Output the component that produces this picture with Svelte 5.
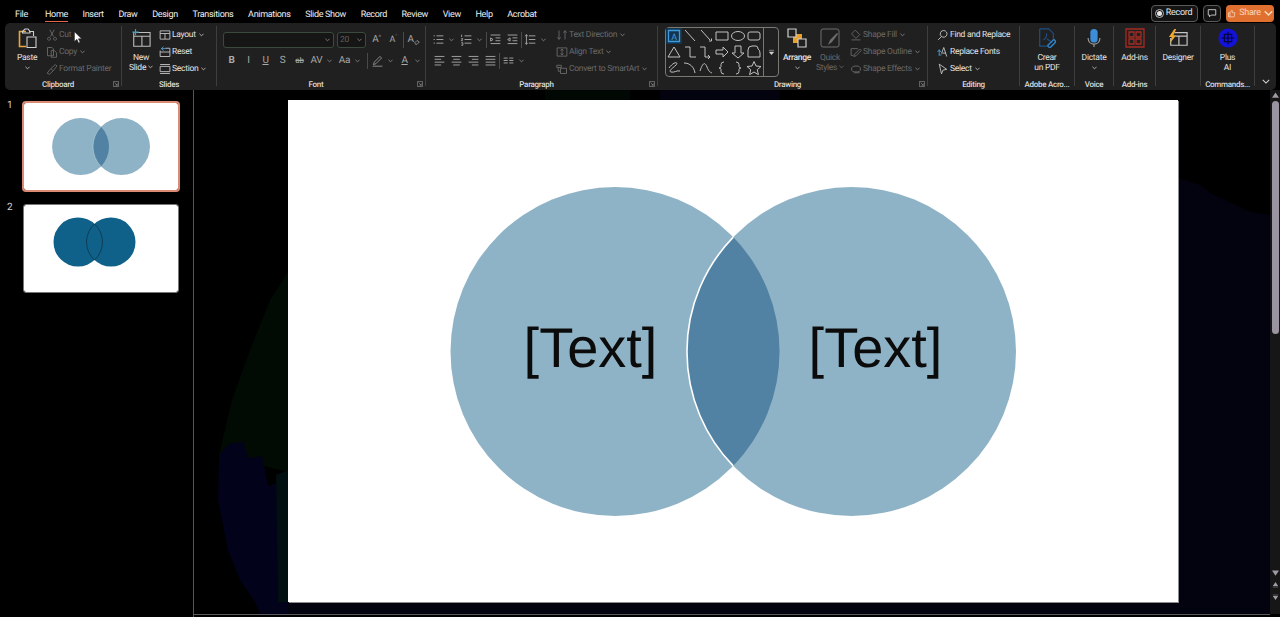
<script>
  const tabs = ['File', 'Home', 'Insert', 'Draw', 'Design', 'Transitions', 'Animations', 'Slide Show', 'Record', 'Review', 'View', 'Help', 'Acrobat'];

  // 16x16 stroke icons, shared by the small ribbon commands
  const icons = {
    cut: 'M5 1l5 9M11 1L6 10M4 11a2 2 0 1 0 .01 0zM12 11a2 2 0 1 0 .01 0z',
    copy: 'M2 2h6l2 2v9H2zM7 6h4l3 3v6H7z',
    painter: 'M1.5 13.5l5-6 3 3-5 4.5zM6.5 7.5l6-5.5 2 2-5 6.5',
    layout: 'M1.5 2.5h13v11h-13zM1.5 6h13M8 6v7.5',
    reset: 'M1.5 6v8h13v-11h-6M1.500 8h13',
    section: 'M1.5 2h13M1.5 14h13M1.5 4.5h13v7h-13z',
    direction: 'M4 2v11M2 11l2 3 2-3M12 14V3M10 5l2-3 2 3',
    align: 'M1.5 2.5h13v11h-13zM8 4v8M6 6l2-2 2 2M6 10l2 2 2-2',
    smartart: 'M1 3h6v3H1zM6 7h8v7H6zM3 6v5h3',
    fill: 'M7 1.5l6 6-5 5-6-6zM2 14.5h12',
    outline: 'M1.5 3.5h9M1.5 3.5v9h3M13 4l2 2-7 7-3 1 1-3z',
    effects: 'M2 8a6 4 0 1 0 12 0a6 4 0 1 0-12 0zM5 13h8',
    find: 'M6 10a4.5 4.5 0 1 0 3-8 4.5 4.5 0 0 0-3 8zM6 10l-4.5 4.5',
    fonts: 'M9 2l4 12M9 2l-3 8M7 9.500h5',
    select: 'M3 1.5l10 7-5 1-2 5z'
  };

  // blue second stroke on the two icons that have one
  const accents = {
    reset: 'M6 1L3 3.500 6 6M3 3.500h6',
    fonts: 'M1 8l2-3 2 3M3 5v7M2 12h4'
  };

  const clipboard = [
    { icon: 'cut', label: 'Cut' },
    { icon: 'copy', label: 'Copy', caret: true },
    { icon: 'painter', label: 'Format Painter' }
  ];
  const slides = [
    { icon: 'layout', label: 'Layout', caret: true, on: true },
    { icon: 'reset', label: 'Reset', on: true },
    { icon: 'section', label: 'Section', caret: true, on: true }
  ];
  const text = [
    { icon: 'direction', label: 'Text Direction', caret: true },
    { icon: 'align', label: 'Align Text', caret: true },
    { icon: 'smartart', label: 'Convert to SmartArt', caret: true }
  ];
  const shapeTools = [
    { icon: 'fill', label: 'Shape Fill', caret: true },
    { icon: 'outline', label: 'Shape Outline', caret: true },
    { icon: 'effects', label: 'Shape Effects', caret: true }
  ];
  const editing = [
    { icon: 'find', label: 'Find and Replace', on: true },
    { icon: 'fonts', label: 'Replace Fonts', on: true },
    { icon: 'select', label: 'Select', caret: true, on: true }
  ];

  // drawing gallery, six across and three down
  const shapes = [
    'M2.500 2.500h11v11h-11z', 'M3 2l10 11', 'M3 2l9 10M11 13h2.5v-2.5', 'M2 4h12v8H2z', 'M1.5 8a6.5 4.5 0 1 0 13 0a6.5 4.5 0 1 0-13 0z', 'M4 4h8q2 0 2 2v4q0 2-2 2H4q-2 0-2-2V6q0-2 2-2z',
    'M8 3l6 10H2z', 'M3 3h5v10h6', 'M2 3h5v10h5M10 11l2 2-2 2', 'M2 6h7V3l5 5-5 5v-3H2z', 'M5 2h6v7h3l-6 5-6-5h3z', 'M2 13V6q0-4 4-4h4q2 0 2 3 2 1 2 4v4z',
    'M3 8c5-7 10-6 7-3S2 11 5 12s6-2 9-1', 'M2 3c6 0 10 4 11 10', 'M2 11c3-9 5-9 7-4s3 5 5 6', 'M10 2q-3 0-3 2.500v2q0 1.500-2 1.500 2 0 2 1.500v2q0 2.500 3 2.500', 'M6 2q3 0 3 2.500v2q0 1.500 2 1.500-2 0-2 1.500v2q0 2.500-3 2.500', 'M8 1.500l2 4.500 5 .5-3.700 3.200 1.100 5L8 12l-4.400 2.700 1.100-5L1 6.500l5-.5z'
  ];
</script>

{#snippet caret()}
  <svg class="caret" viewBox="0 0 6 4"><path d="M.5 .5L3 3l2.500-2.500" /></svg>
{/snippet}

{#snippet glyph(d)}
  <svg class="glyph" viewBox="0 0 16 16"><path {d} /></svg>
{/snippet}

{#snippet tool(item)}
  <div class="tool" class:on={item.on}>
    <svg class="tool-icon" viewBox="0 0 16 16">
      <path d={icons[item.icon]} />
      {#if accents[item.icon]}<path class="accent" d={accents[item.icon]} />{/if}
    </svg>
    <span>{item.label}</span>
    {#if item.caret}{@render caret()}{/if}
  </div>
{/snippet}

{#snippet launcher()}
  <svg class="launcher" viewBox="0 0 7 7"><path d="M.5 .5h6v6h-6zM2 2l3 3M5 3v2H3" /></svg>
{/snippet}

{#snippet venn(labels)}
  <svg class="venn" viewBox="0 0 890 502">
    <circle cx="327" cy="251.500" r="164.500" fill="#8fb3c6" />
    <circle cx="563.500" cy="251.500" r="164.500" fill="#8fb3c6" />
    <path d="M445.250 137.100A164.500 164.500 0 0 1 445.250 365.900A164.500 164.500 0 0 1 445.250 137.100z" fill="#5282a3" />
    <path d="M445.250 365.900A164.500 164.500 0 0 1 445.250 137.100" fill="none" stroke="#fff" stroke-width="1.600" />
    {#if labels}
      <text x="302.500" y="267">[Text]</text>
      <text x="587.500" y="267">[Text]</text>
    {/if}
  </svg>
{/snippet}

<div class="app">
  <header class="topbar">
    <nav class="tabs">
      {#each tabs as tab}
        <span class="tab" class:active={tab === 'Home'}>{tab}</span>
      {/each}
    </nav>
    <div class="actions">
      <div class="record"><span class="dot"></span>Record</div>
      <div class="comment">
        <svg viewBox="0 0 12 12"><path d="M1.500 2h9v6.500H5L3 10.500V8.500H1.500z" /></svg>
      </div>
      <div class="share">
        <svg viewBox="0 0 12 12"><path d="M2 5h2l2-3h1v3h3.500L9.500 10.500H2zM4 5v5.500" /></svg>
        Share
        {@render caret()}
      </div>
    </div>
  </header>

  <section class="ribbon">
    <div class="group clipboard">
      <div class="body">
        <div class="big paste">
          <svg class="big-icon" viewBox="0 0 20 20">
            <path d="M9 3.500H2.500v15H9" fill="none" stroke="#eaa63c" stroke-width="1.600" />
            <path d="M12 3.500h4.500V8M5.500 3.500L8 1h3l2 2.500V5H5.500z" fill="none" stroke="#cfcfcf" stroke-width="1.100" />
            <path d="M10 9h9v10.500h-9z" fill="#202020" stroke="#cfcfcf" stroke-width="1.100" />
          </svg>
          <span>Paste</span>
          {@render caret()}
        </div>
        <div class="col">
          {#each clipboard as item}{@render tool(item)}{/each}
        </div>
      </div>
      <div class="label">Clipboard</div>
      {@render launcher()}
    </div>

    <div class="group slides">
      <div class="body">
        <div class="big new-slide">
          <svg class="big-icon" viewBox="0 0 22 22">
            <path d="M3 5h18v15H3zM3 9h18M12 9v11" fill="none" stroke="#bdbdbd" stroke-width="1.200" />
            <path d="M5 1v7M1.500 4.500h7" fill="none" stroke="#3f9fb5" stroke-width="1.200" />
          </svg>
          <span>New</span>
          <span>Slide {@render caret()}</span>
        </div>
        <div class="col">
          {#each slides as item}{@render tool(item)}{/each}
        </div>
      </div>
      <div class="label">Slides</div>
    </div>

    <div class="group font">
      <div class="body stack">
        <div class="row first">
          <div class="select wide">{@render caret()}</div>
          <div class="select size"><span>20</span>{@render caret()}</div>
          <span class="cell">A<sup>^</sup></span>
          <span class="cell small">A<sup>ˇ</sup></span>
          <i class="sep"></i>
          <span class="cell clear">
            A
            <svg viewBox="0 0 8 8"><path d="M1 5l3-3 3 2-3 3H2z" /></svg>
          </span>
        </div>
        <div class="row second">
          <b class="cell">B</b>
          <em class="cell">I</em>
          <u class="cell">U</u>
          <span class="cell">S</span>
          <s class="cell tiny">ab</s>
          <span class="cell av">AV</span>{@render caret()}
          <span class="cell aa">Aa</span>{@render caret()}
          <i class="sep"></i>
          <span class="cell pen">
            <svg viewBox="0 0 16 16"><path d="M4 10l7-7 2 2-7 7-3 1zM2 15h12" /></svg>
          </span>{@render caret()}
          <u class="cell color">A</u>{@render caret()}
        </div>
      </div>
      <div class="label">Font</div>
      {@render launcher()}
    </div>

    <div class="group paragraph">
      <div class="body">
        <div class="stack lists">
          <div class="row first">
            <span class="cell">{@render glyph('M2 3.500h1.500M2 8h1.500M2 12.500h1.500M5.500 3.500H14M5.500 8H14M5.500 12.500H14')}</span>{@render caret()}
            <span class="cell">{@render glyph('M2 2v3M1.500 7h2l-2 2.500h2M1.500 12h2v3h-2M5.500 3.500H14M5.500 8H14M5.500 12.500H14')}</span>{@render caret()}
            <i class="sep"></i>
            <span class="cell">{@render glyph('M2 2.500h12M8 6h6M8 9.500h6M2 13h12M2 6l3 2-3 2z')}</span>
            <span class="cell">{@render glyph('M2 2.500h12M8 6h6M8 9.500h6M2 13h12M5 6L2 8l3 2z')}</span>
            <i class="sep"></i>
            <span class="cell">{@render glyph('M6 3.500h8M6 8h8M6 12.500h8M3 2v12M1.500 4L3 2l1.500 2M1.500 12L3 14l1.500-2')}</span>{@render caret()}
          </div>
          <div class="row second">
            <span class="cell">{@render glyph('M2 3h12M2 6.500h8M2 10h12M2 13.500h8')}</span>
            <span class="cell">{@render glyph('M2 3h12M4 6.500h8M2 10h12M4 13.500h8')}</span>
            <span class="cell">{@render glyph('M2 3h12M6 6.500h8M2 10h12M6 13.500h8')}</span>
            <span class="cell">{@render glyph('M2 3h12M2 6.500h12M2 10h12M2 13.500h12')}</span>
            <i class="sep"></i>
            <span class="cell">{@render glyph('M2 5h5M9 5h5M2 8h5M9 8h5M2 11h5M9 11h5')}</span>{@render caret()}
          </div>
        </div>
        <div class="col">
          {#each text as item}{@render tool(item)}{/each}
        </div>
      </div>
      <div class="label">Paragraph</div>
      {@render launcher()}
    </div>

    <div class="group drawing">
      <div class="body">
        <div class="gallery">
          <div class="shapes">
            {#each shapes as d, i}
              <svg class="shape" class:picked={i === 0} viewBox="0 0 16 16">
                <path {d} />
                {#if i === 0}<text x="8" y="11.500">A</text>{/if}
              </svg>
            {/each}
          </div>
          <div class="more">
            <svg viewBox="0 0 8 8"><path d="M1 1.500h6M1.500 3.500L4 6.500l2.500-3z" /></svg>
          </div>
        </div>
        <div class="big arrange">
          <svg class="big-icon" viewBox="0 0 20 20">
            <path d="M6 6h9v9H6z" fill="#e9a02c" />
            <path d="M1 1h8v8H1zM11 11h8v8h-8z" fill="#202020" stroke="#cfcfcf" stroke-width="1.200" />
          </svg>
          <span>Arrange</span>
          {@render caret()}
        </div>
        <div class="big quick">
          <svg class="big-icon" viewBox="0 0 20 20">
            <path d="M3 1h14q2 0 2 2v14q0 2-2 2H3q-2 0-2-2V3q0-2 2-2z" fill="none" stroke="#6e6e6e" />
            <path d="M8 17l2-5 7-7 1 1-6 8z" fill="#6e6e6e" />
          </svg>
          <span>Quick</span>
          <span>Styles {@render caret()}</span>
        </div>
        <div class="col">
          {#each shapeTools as item}{@render tool(item)}{/each}
        </div>
      </div>
      <div class="label">Drawing</div>
      {@render launcher()}
    </div>

    <div class="group editing">
      <div class="body">
        <div class="col">
          {#each editing as item}{@render tool(item)}{/each}
        </div>
      </div>
      <div class="label">Editing</div>
    </div>

    <div class="group adobe">
      <div class="body">
        <div class="big">
          <svg class="big-icon" viewBox="0 0 20 22">
            <path d="M2 1h10l5 5v7M2 1v19h9" fill="none" stroke="#1d4f86" stroke-width="1.300" />
            <path d="M6 13c3-1 4-5 3.500-7M10 12l6 4" fill="none" stroke="#1d4f86" stroke-width="1.300" />
            <path d="M11 19l6-6a2 2 0 0 1 2 3l-5 5a2 2 0 0 1-3-2z" fill="none" stroke="#2f86c9" stroke-width="1.500" />
          </svg>
          <span>Crear</span>
          <span>un PDF</span>
        </div>
      </div>
      <div class="label">Adobe Acro...</div>
    </div>

    <div class="group voice">
      <div class="body">
        <div class="big">
          <svg class="big-icon" viewBox="0 0 20 22">
            <path d="M6 5a4 4 0 0 1 8 0v7a4 4 0 0 1-8 0z" fill="#3d8ed8" />
            <path d="M3.500 11c0 9 13 9 13 0M10 17v4" fill="none" stroke="#9a9a9a" stroke-width="1.300" />
          </svg>
          <span>Dictate</span>
          {@render caret()}
        </div>
      </div>
      <div class="label">Voice</div>
    </div>

    <div class="group addins">
      <div class="body">
        <div class="big">
          <svg class="big-icon" viewBox="0 0 20 20">
            <path d="M1 1h18v18H1zM4 4h5v5H4zM11 4h5v5h-5zM4 11h5v5H4zM11 11h5v5h-5z" fill="none" stroke="#a62b22" stroke-width="1.300" />
          </svg>
          <span>Add-ins</span>
        </div>
      </div>
      <div class="label">Add-ins</div>
    </div>

    <div class="group designer">
      <div class="body">
        <div class="big">
          <svg class="big-icon" viewBox="0 0 22 20">
            <path d="M7 4h14v14H3V10M8 8h13M12 8v10" fill="none" stroke="#c4c4c4" stroke-width="1.300" />
            <path d="M7 0L1 9h3l-2 7 7-9H6l3-7z" fill="#efa92f" />
          </svg>
          <span>Designer</span>
        </div>
      </div>
      <div class="label"></div>
    </div>

    <div class="group commands">
      <div class="body">
        <div class="big">
          <svg class="big-icon" viewBox="0 0 22 22">
            <circle cx="11" cy="11" r="10.500" fill="#1212d8" />
            <path d="M11 4v14M4 11h14M7 7h8v8H7z" fill="none" stroke="#06063a" stroke-width="1.300" />
          </svg>
          <span>Plus</span>
          <span>AI</span>
        </div>
      </div>
      <div class="label">Commands...</div>
    </div>

    <svg class="collapse" viewBox="0 0 10 6"><path d="M1 1l4 4 4-4" /></svg>
  </section>

  <main class="work">
    <aside class="thumbs">
      <div class="thumb-row">
        <span class="num">1</span>
        <div class="thumb current">{@render venn(false)}</div>
      </div>
      <div class="thumb-row">
        <span class="num">2</span>
        <div class="thumb">
          <svg class="venn" viewBox="0 0 154 87">
            <circle cx="54" cy="37" r="24.500" fill="#10618a" />
            <circle cx="87" cy="37" r="24.500" fill="#10618a" />
            <path d="M70.500 18.900A24.500 24.500 0 0 1 70.500 55.100A24.500 24.500 0 0 1 70.500 18.900z" fill="none" stroke="#0b3a50" stroke-width=".9" />
          </svg>
        </div>
      </div>
    </aside>

    <div class="editor">
      <div class="stage">
        <svg class="backdrop" viewBox="0 0 1076 524">
          <path d="M94 182L76 210 56 260 38 310 25 365 94 382z" fill="#010a03" />
          <path d="M25 365l-1 45 10 50 12 30 15 22 5 12h28V390l-20 6-6-30-14 2-5-16-14 2z" fill="#02021a" />
          <path d="M82 385l12-5v132H84z" fill="#010f10" />
          <path d="M984 88l22 7 10 8 15 7 25 12 20 3v399H94v-12h890z" fill="#03030f" />
          <path d="M351 0h85v10h-85z" fill="#010803" />
          <path d="M466 0h120v10H466z" fill="#03030f" />
        </svg>
        <div class="slide">{@render venn(true)}</div>
      </div>
      <div class="statusline"></div>
    </div>

    <div class="scrollbar">
      <svg class="arrow" viewBox="0 0 8 6"><path d="M4 0l4 6H0z" /></svg>
      <div class="scroll-thumb"></div>
      <div class="scroll-end">
        <svg class="arrow" viewBox="0 0 8 6"><path d="M0 0h8L4 6z" /></svg>
        <svg class="arrow" viewBox="0 0 8 9"><path d="M4 0l4 6H0zM0 7h8v1H0z" /></svg>
        <svg class="arrow" viewBox="0 0 8 9"><path d="M0 1h8v1H0zM0 3h8L4 9z" /></svg>
      </div>
    </div>
  </main>

  <svg class="cursor" viewBox="0 0 9 14">
    <path d="M.5 .5v11l2.800-2.400 1.800 4 1.700-.8-1.800-3.800H8.500z" fill="#fff" stroke="#222" stroke-width=".6" />
  </svg>
</div>

<style>
  :global(body) {
    background: #000;
  }

  .app {
    position: relative;
    width: 1280px;
    height: 617px;
    overflow: hidden;
    background: #000;
    color: #e4e4e4;
    font: 8.5px/10px Roboto, "Open Sans", sans-serif;
    letter-spacing: -.28px;
    text-rendering: geometricPrecision;
  }

  /* top row */
  .topbar {
    display: flex;
    justify-content: space-between;
    align-items: center;
    height: 23px;
    padding: 6px 6px 0 15px;
    box-sizing: border-box;
  }

  .tabs {
    display: flex;
    gap: 14.650px;
  }

  .tab {
    position: relative;
    font-size: 9px;
    letter-spacing: -.32px;
    color: #f0f0f0;
  }

  .tab:first-child {
    margin-right: 2.500px;
  }

  .tab.active::after {
    content: "";
    position: absolute;
    left: 0;
    right: 0;
    bottom: -2px;
    height: 1px;
    background: #e0674a;
  }

  .actions {
    display: flex;
    gap: 5px;
    margin-top: -3px;
  }

  .record,
  .comment,
  .share {
    display: flex;
    align-items: center;
    justify-content: center;
    height: 17px;
    box-sizing: border-box;
    border-radius: 4px;
  }

  .record {
    width: 47px;
    gap: 2px;
    border: 1px solid #5a5a5a;
    background: #141414;
    font-size: 9px;
    color: #e8e8e8;
  }

  .dot {
    width: 5px;
    height: 5px;
    border-radius: 50%;
    background: #e8e8e8;
    outline: 1px solid #bbb;
    outline-offset: 1px;
    margin-right: 2px;
  }

  .comment {
    width: 18px;
    border: 1px solid #5a5a5a;
    background: #141414;
  }

  .comment svg {
    width: 10px;
    height: 10px;
    fill: none;
    stroke: #e0e0e0;
  }

  .share {
    width: 48px;
    gap: 3px;
    background: #e0702f;
    color: #f8d8c0;
    font-size: 9px;
  }

  .share svg {
    width: 9px;
    height: 9px;
    fill: none;
    stroke: #f8d8c0;
  }

  .share .caret {
    stroke: #f8d8c0;
    margin: 0;
  }

  /* ribbon */
  .ribbon {
    display: flex;
    position: relative;
    height: 67px;
    box-sizing: border-box;
    margin: 0 4px 0 5px;
    padding-top: 3px;
    background: #202020;
    border-radius: 5px;
  }

  .group {
    position: relative;
    display: flex;
    flex-direction: column;
    height: 60px;
    box-sizing: border-box;
    border-right: 1px solid #3e3e3e;
  }

  .clipboard { width: 117px; }
  .slides { width: 95px; }
  .font { width: 209px; }
  .paragraph { width: 232px; }
  .drawing { width: 270px; }
  .editing { width: 92px; }
  .adobe { width: 55px; }
  .voice { width: 39px; }
  .addins { width: 42px; }
  .designer { width: 45px; }
  .commands { width: 54px; }

  .body {
    display: flex;
    height: 52px;
  }

  .label {
    height: 8px;
    line-height: 14px;
    text-align: center;
    font-size: 8px;
    font-weight: 500;
    color: #dcdcdc;
    white-space: nowrap;
  }

  .clipboard .label,
  .font .label,
  .paragraph .label,
  .drawing .label {
    padding-right: 10px;
  }

  .launcher {
    position: absolute;
    right: 2px;
    bottom: -1px;
    width: 6px;
    height: 6px;
    fill: none;
    stroke: #8a8a8a;
    stroke-width: .8;
  }

  .caret {
    flex: none;
    width: 5px;
    height: 4px;
    fill: none;
    stroke: #8a8a8a;
    stroke-width: 1;
  }

  .big {
    display: flex;
    flex-direction: column;
    align-items: center;
    flex: 1;
    color: #e4e4e4;
    white-space: nowrap;
  }

  .big .big-icon {
    flex: none;
    width: 20px;
    height: 20px;
    margin: 2px 0 5px;
  }

  .big > .caret {
    margin-top: 3px;
    stroke: #c8c8c8;
  }

  .big span .caret {
    vertical-align: 1px;
    stroke: #c8c8c8;
  }

  .paste {
    flex: none;
    width: 34px;
    margin-left: 5px;
  }

  .new-slide {
    flex: none;
    width: 38px;
  }

  .col {
    display: flex;
    flex-direction: column;
    flex: none;
  }

  .clipboard .col { margin-left: 2px; }
  .slides .col { margin-left: -1px; }
  .drawing .col { margin-left: 5px; }
  .editing .col { margin-left: 9px; }

  .tool {
    display: flex;
    align-items: center;
    gap: 1px;
    height: 17px;
    color: #696969;
    white-space: nowrap;
  }

  .tool span {
    padding-top: 1px;
  }

  .tool.on {
    color: #e4e4e4;
  }

  .tool .caret {
    margin-left: 2px;
  }

  .tool.on .caret {
    stroke: #c8c8c8;
  }

  .tool-icon {
    width: 12px;
    height: 12px;
    fill: none;
    stroke: currentColor;
    stroke-width: 1.200;
  }

  .tool.on .tool-icon {
    stroke: #c4c4c4;
  }

  .tool.on .tool-icon .accent {
    stroke: #4a9fd0;
  }

  /* font and paragraph button rows */
  .stack {
    display: flex;
    flex-direction: column;
    padding-top: 3px;
  }

  .row {
    display: flex;
    align-items: center;
    height: 21px;
  }

  .cell {
    flex: none;
    display: flex;
    align-items: center;
    justify-content: center;
    width: 17px;
    font-style: normal;
    font-size: 10px;
    color: #a8a8a8;
  }

  .cell sup {
    font-size: 6px;
    line-height: 6px;
    align-self: flex-start;
  }

  .cell.small {
    font-size: 9px;
  }

  .cell.tiny {
    font-size: 8px;
  }

  .cell svg {
    width: 13px;
    height: 13px;
    fill: none;
    stroke: #a0a0a0;
  }

  .cell.clear svg {
    width: 6px;
    height: 6px;
    margin-top: 4px;
  }

  .glyph {
    stroke-width: 1.200;
  }

  .sep {
    flex: none;
    width: 1px;
    height: 16px;
    background: #4a4a4a;
  }

  .select {
    display: flex;
    align-items: center;
    justify-content: flex-end;
    height: 16px;
    box-sizing: border-box;
    padding-right: 3px;
    background: #161616;
    border: 1px solid #3b4a3e;
    border-radius: 3px;
    color: #5e5e5e;
  }

  .select.wide {
    width: 111px;
    margin-left: 6px;
  }

  .select.size {
    width: 29px;
    margin: 0 2px 0 3px;
    justify-content: space-between;
    padding-left: 2px;
  }

  .font .row .sep {
    margin-left: 1px;
    margin-right: 1px;
  }

  .font .second {
    padding-left: 6px;
  }

  .font .second > .caret {
    margin: 0 0 0 2px;
  }

  .cell.aa {
    margin-left: 4px;
  }

  .font .second > .sep {
    margin: 0 1px 0 7px;
  }

  .cell.color {
    margin-left: 3px;
  }

  .lists {
    flex: none;
    width: 130px;
  }

  .lists .first {
    padding-left: 4px;
  }

  .lists .second {
    padding-left: 5px;
  }

  .lists .caret {
    margin: 0 4px 0 2px;
  }

  /* shape gallery */
  .gallery {
    display: flex;
    flex: none;
    width: 114px;
    height: 50px;
    box-sizing: border-box;
    margin: 1px 3px 0 7px;
    border: 1px solid #777a70;
    border-radius: 4px;
  }

  .shapes {
    display: grid;
    grid-template-columns: repeat(6, 16px);
    grid-auto-rows: 16px;
    flex: none;
    width: 97px;
  }

  .shape {
    width: 16px;
    height: 16px;
    fill: none;
    stroke: #c0c0c0;
    stroke-width: 1;
  }

  .shape.picked {
    stroke: #3f9bdc;
    background: #12344e;
    stroke-width: 1.300;
  }

  .shape text {
    fill: #3f9bdc;
    stroke: none;
    font-size: 9px;
    text-anchor: middle;
  }

  .more {
    display: flex;
    align-items: center;
    justify-content: center;
    flex: 1;
    border-left: 1px solid #777a70;
  }

  .more svg {
    width: 7px;
    height: 7px;
    fill: #d0d0d0;
    stroke: #d0d0d0;
    stroke-width: .6;
  }

  .arrange,
  .quick {
    flex: none;
    width: 30px;
  }

  .arrange {
    font-weight: 500;
  }

  .quick {
    margin-left: 3px;
    color: #696969;
  }

  .quick span .caret {
    stroke: #696969;
  }

  .collapse {
    align-self: flex-end;
    width: 8px;
    height: 5px;
    margin: 0 0 6px 7px;
    fill: none;
    stroke: #d8d8d8;
    stroke-width: 1.300;
  }

  /* workspace */
  .work {
    display: flex;
    height: 527px;
  }

  .thumbs {
    flex: none;
    width: 194px;
    box-sizing: border-box;
    padding-top: 13px;
    border-right: 1px solid #555;
    height: 527px;
  }

  .thumb-row {
    display: flex;
    height: 102px;
    padding-left: 7px;
  }

  .num {
    width: 17px;
    margin-top: -2px;
    font-size: 10px;
    line-height: 10px;
    color: #d0d0d0;
  }

  .thumb {
    width: 154px;
    height: 87px;
    box-sizing: border-box;
    background: #fff;
    border-radius: 2px;
    outline: 1px solid #777;
  }

  .thumb.current {
    outline: 2px solid #db8b74;
    border-radius: 2px;
  }

  .venn {
    display: block;
    width: 100%;
    height: 100%;
  }

  .venn text {
    font: 56px "Liberation Sans", Arial, sans-serif;
    letter-spacing: 0;
    fill: #0b0b0b;
    text-anchor: middle;
  }

  .editor {
    display: flex;
    flex-direction: column;
    flex: 1;
  }

  .stage {
    position: relative;
    flex: 1;
    padding: 10px 0 0 94px;
  }

  .backdrop {
    position: absolute;
    inset: 0;
    width: 100%;
    height: 100%;
  }

  .slide {
    position: relative;
    width: 890px;
    height: 502px;
    box-sizing: border-box;
    background: #fff;
    box-shadow: 1px 1px 0 #8c8c90;
  }

  .statusline {
    height: 2px;
    border-top: 1px solid #5a5a5a;
  }

  .scrollbar {
    display: flex;
    flex-direction: column;
    align-items: center;
    flex: none;
    width: 10px;
    height: 524px;
    background: #161616;
  }

  .arrow {
    width: 7px;
    height: 6px;
    margin-top: 2px;
    fill: #a09aa4;
  }

  .scroll-thumb {
    width: 7px;
    height: 233px;
    margin-top: 3px;
    background: #9a94a0;
    border-radius: 4px;
  }

  .scroll-end {
    display: flex;
    flex-direction: column;
    align-items: center;
    gap: 4px;
    margin-top: auto;
    padding-bottom: 14px;
  }

  .cursor {
    position: absolute;
    left: 74px;
    top: 31px;
    width: 8px;
    height: 13px;
  }
</style>
